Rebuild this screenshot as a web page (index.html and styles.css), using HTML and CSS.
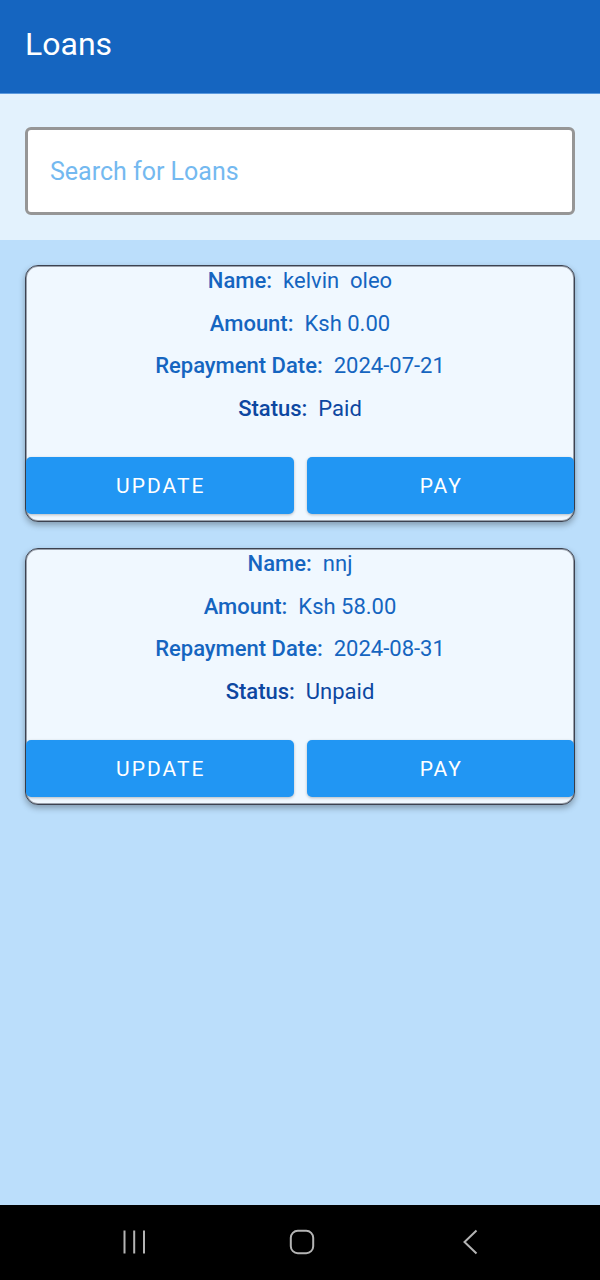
FILE: index.html
```html
<!DOCTYPE html>
<html lang="en">
<head>
<meta charset="utf-8">
<meta name="viewport" content="width=device-width, initial-scale=1">
<title>Loans</title>
<link rel="stylesheet" href="styles.css">
</head>
<body>
<div class="app">
  <header class="app-bar"><h1 class="app-title">Loans</h1></header>
  <form class="search" role="search">
    <input class="search-input" type="text" placeholder="Search for Loans" aria-label="Search for Loans">
  </form>
  <main class="loans">
    <article class="loan">
      <dl class="details">
        <div class="row"><dt>Name:</dt><dd>kelvin  oleo</dd></div>
        <div class="row"><dt>Amount:</dt><dd>Ksh 0.00</dd></div>
        <div class="row"><dt>Repayment Date:</dt><dd>2024-07-21</dd></div>
        <div class="row row-status"><dt>Status:</dt><dd>Paid</dd></div>
      </dl>
      <div class="actions">
        <button class="action" type="button">UPDATE</button>
        <button class="action" type="button">PAY</button>
      </div>
    </article>
    <article class="loan">
      <dl class="details">
        <div class="row"><dt>Name:</dt><dd>nnj</dd></div>
        <div class="row"><dt>Amount:</dt><dd>Ksh 58.00</dd></div>
        <div class="row"><dt>Repayment Date:</dt><dd>2024-08-31</dd></div>
        <div class="row row-status"><dt>Status:</dt><dd>Unpaid</dd></div>
      </dl>
      <div class="actions">
        <button class="action" type="button">UPDATE</button>
        <button class="action" type="button">PAY</button>
      </div>
    </article>
  </main>
  <nav class="system-nav" aria-label="System navigation">
    <button class="nav-button" type="button" aria-label="Recent apps">
      <svg width="28" height="28" viewBox="0 0 28 28"><path d="M4.500 2.500v23M14.200 2.500v23M24 2.500v23"/></svg>
    </button>
    <button class="nav-button" type="button" aria-label="Home">
      <svg width="28" height="28" viewBox="0 0 28 28"><rect x="2.800" y="2.800" width="22.400" height="22.400" rx="7"/></svg>
    </button>
    <button class="nav-button" type="button" aria-label="Back">
      <svg width="28" height="28" viewBox="0 0 28 28"><path d="M20.500 2.500L8.500 14l12 11.500"/></svg>
    </button>
  </nav>
</div>
</body>
</html>
```
FILE: styles.css
```css
* { box-sizing: border-box; }

body {
  margin: 0;
  font-family: Roboto, "Noto Sans", sans-serif;
  background: #bbdefb;
}

.app {
  display: flex;
  flex-direction: column;
  min-height: 100vh;
}

.app-bar {
  padding: 25px 25px 29px;
  background: #1565c0;
  border-bottom: 1px solid #5c9ade;
}

.app-title {
  margin: 0;
  font-size: 32px;
  line-height: 39px;
  font-weight: 400;
  color: #fff;
}

.search {
  display: flex;
  padding: 33px 25px 25px;
  background: #e3f2fd;
}

.search-input {
  flex: 1;
  min-width: 0;
  height: 88px;
  padding: 0 22px;
  border: 3px solid #969696;
  border-radius: 6px;
  background: #fff;
  font: 400 25px/32px Roboto, "Noto Sans", sans-serif;
  color: #1565c0;
}

.search-input::placeholder {
  color: #74b9f0;
  opacity: 1;
}

.loans {
  flex: 1;
  display: flex;
  flex-direction: column;
  gap: 26px;
  padding: 25px;
}

.loan {
  padding-bottom: 7px;
  border: 1px solid #3c4250;
  border-radius: 13px;
  background: #f0f8ff;
  box-shadow: inset 0 0 0 1px #9aa1ac, 0 3px 6px rgba(0, 0, 0, 0.3);
}

.details {
  display: flex;
  flex-direction: column;
  justify-content: space-between;
  min-height: 158px;
  margin: 0 0 33px;
  font-size: 22px;
  line-height: 30px;
  color: #1565c0;
}

.row {
  display: flex;
  justify-content: center;
  gap: 11px;
  white-space: pre;
}

.row dt { font-weight: 500; }
.row dd { margin: 0; }
.row-status { color: #0d47a1; }

.actions {
  display: grid;
  grid-template-columns: 1fr 1fr;
  gap: 13px;
}

.action {
  height: 57px;
  padding: 0 0 0 2px;
  border: 0;
  border-radius: 5px;
  background: #2196f3;
  box-shadow: 0 1px 3px rgba(0, 0, 0, 0.25);
  font: 400 21px/30px Roboto, "Noto Sans", sans-serif;
  letter-spacing: 2px;
  color: #fff;
}

.system-nav {
  display: flex;
  justify-content: center;
  gap: 140px;
  height: 75px;
  padding: 0 0 2px 4px;
  background: #000;
}

.nav-button {
  display: flex;
  align-items: center;
  padding: 0;
  border: 0;
  background: none;
}

.nav-button svg {
  fill: none;
  stroke: #b4b4b4;
  stroke-width: 2;
}
```
